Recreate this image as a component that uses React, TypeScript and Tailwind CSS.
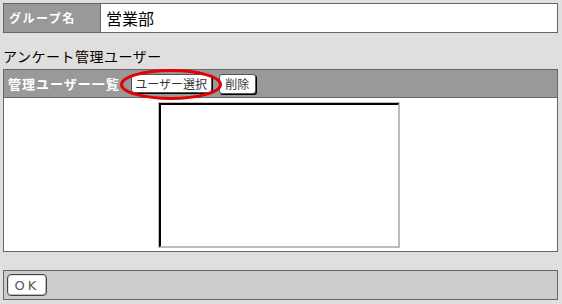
export default function App() {
  const jp = { fontFamily: '"Noto Sans CJK JP", "Noto Sans", sans-serif' };
  return (
    <div className="w-[562px] h-[304px] bg-[#e0dfdd] pt-[3px] px-[3px] overflow-hidden" style={jp}>
      {/* グループ名 */}
      <div className="flex w-[555px] h-[30px] border border-[#666666] bg-white">
        <div className="w-[97px] bg-[#999999] border-r border-[#666666] flex items-center pl-[5px] text-white font-bold text-[12px] tracking-[1.5px]">
          グループ名
        </div>
        <div className="flex-1 flex items-center pl-[5px] text-[16px] text-black">営業部</div>
      </div>

      <div className="mt-[10px] h-[26px] flex items-center text-[14px] text-black tracking-[0.5px]">
        アンケート管理ユーザー
      </div>

      {/* 管理ユーザー一覧 */}
      <div className="w-[555px] h-[183px] border border-[#666666] bg-white flex flex-col">
        <div className="relative h-[28px] bg-[#999999] border-b border-[#666666] flex items-center pl-[4px]">
          <span className="text-white font-bold text-[13px] tracking-[1px]">管理ユーザー一覧</span>
          <button className="ml-[11px] h-[19px] w-[81px] bg-white border border-[#555555] rounded-[3px] shadow-[1px_1px_0_#000] text-[12px] text-[#333333] leading-none">
            ユーザー選択
          </button>
          <button className="ml-[7px] h-[20px] w-[37px] bg-white border border-[#555555] rounded-[3px] shadow-[1px_1px_0_#000] text-[12px] text-[#333333] leading-none">
            削除
          </button>
          <svg className="absolute left-[116px] top-[-1px] pointer-events-none" width="104" height="33" viewBox="0 0 104 33">
            <ellipse cx="51" cy="15.5" rx="49.5" ry="14" fill="none" stroke="#e60000" strokeWidth="3" />
          </svg>
        </div>
        <div className="flex-1 flex justify-center pt-[4px] pr-[3px]">
          <div className="w-[242px] h-[146px] border border-[#bdbdbd]">
            <div className="w-full h-full border-t-2 border-l-2 border-r border-b border-t-black border-l-black border-r-[#bdbdbd] border-b-[#bdbdbd] bg-white" />
          </div>
        </div>
      </div>

      {/* OK */}
      <div className="mt-[18px] w-[555px] h-[30px] border border-[#666666] bg-[#cccccc] flex items-center pl-[3px]">
        <button className="w-[40px] h-[22px] bg-white border border-[#444444] rounded-[4px] shadow-[inset_-1px_-1px_0_#bbbbbb,inset_1px_1px_0_#dddddd] text-[13px] text-[#555555] tracking-[3px] leading-none" style={{ fontFamily: '"DejaVu Sans", sans-serif' }}>
          OK
        </button>
      </div>
    </div>
  );
}
